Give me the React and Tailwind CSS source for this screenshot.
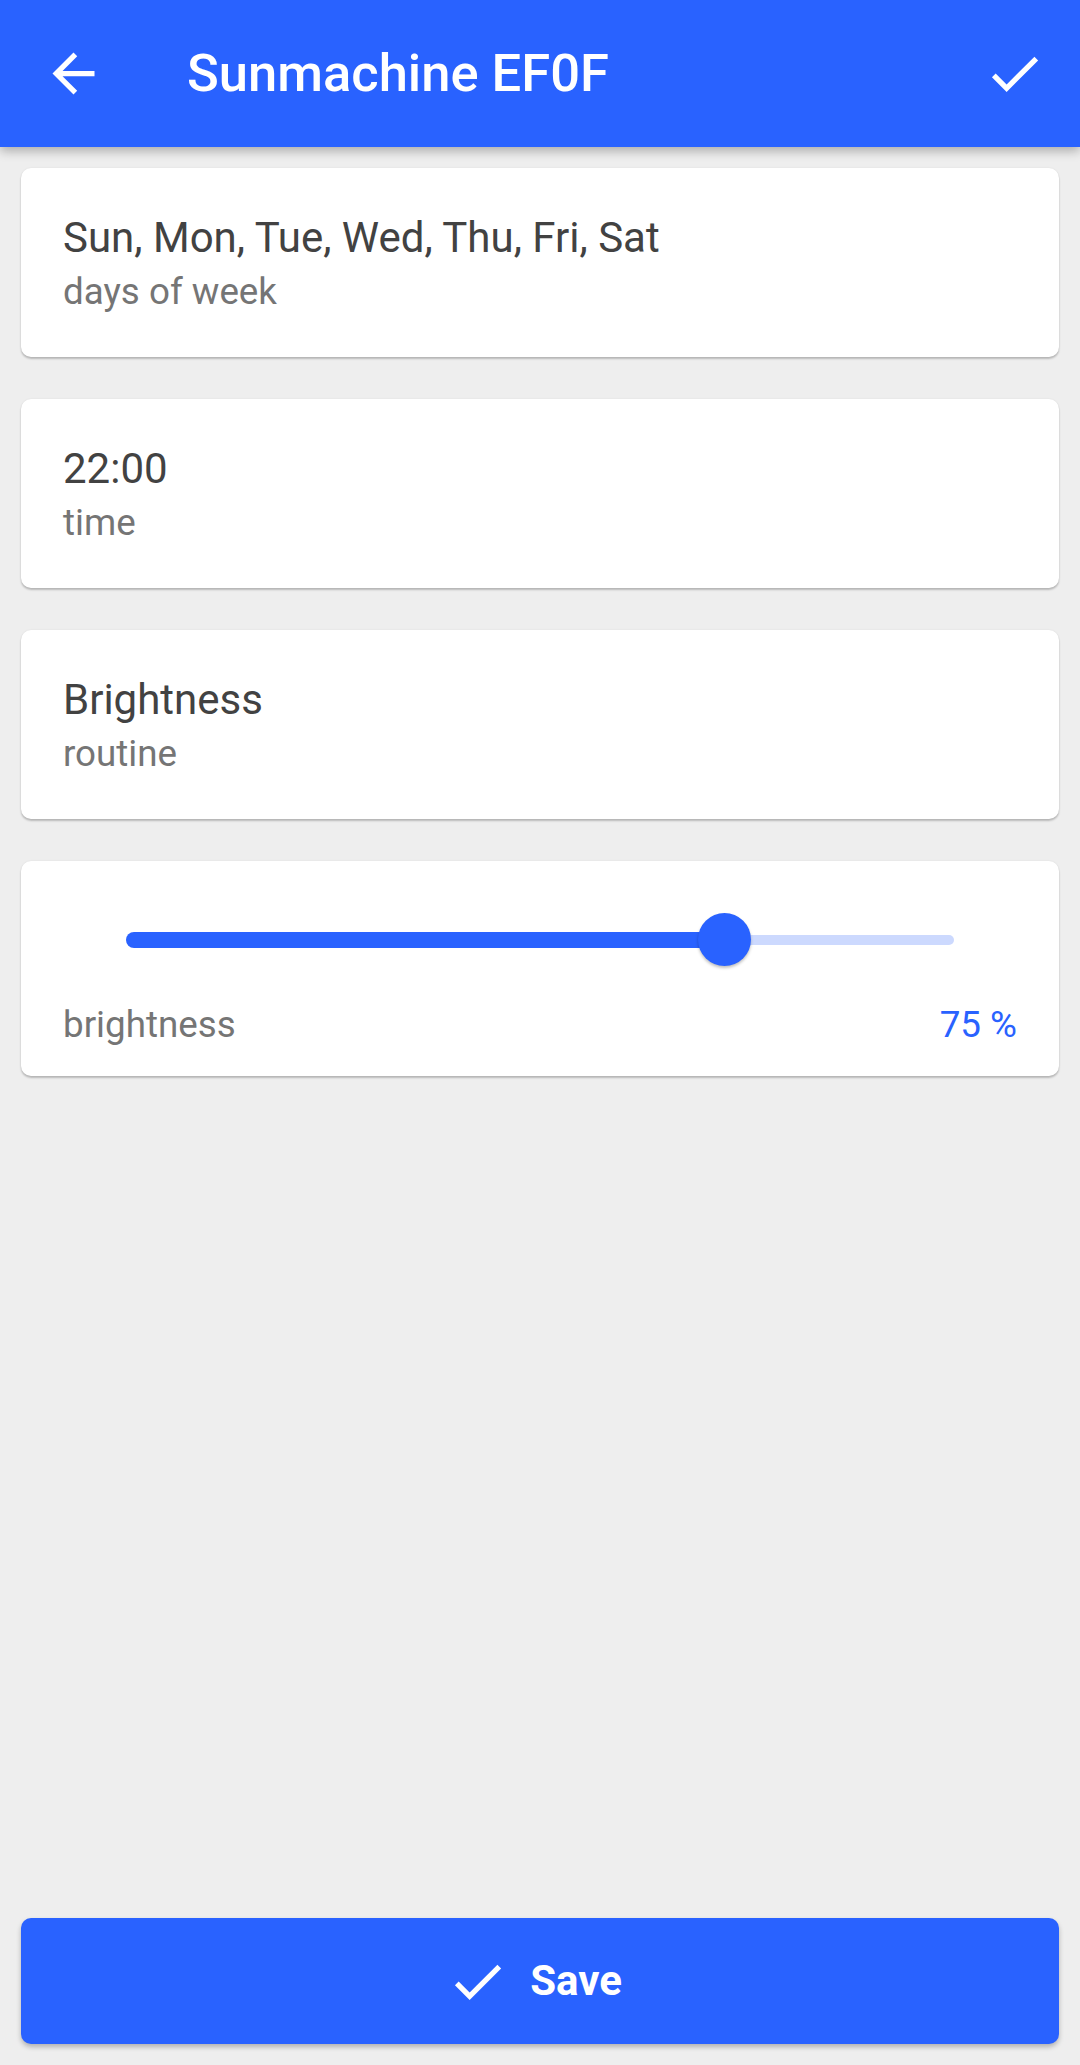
import React from "react";

function Card({ title, subtitle }) {
  return (
    <div className="h-[189px] rounded-[10px] bg-white shadow-[0_2px_2px_rgba(0,0,0,0.22),0_0_2px_rgba(0,0,0,0.08)] pl-[42px] pr-[42px] pt-[45px] flex flex-col">
      <div className="text-[42px] leading-[49px] text-[#424242]">{title}</div>
      <div className="mt-[8px] text-[36.75px] leading-[43px] text-[#757575]">{subtitle}</div>
    </div>
  );
}

function CheckIcon({ className }) {
  return (
    <svg viewBox="0 0 24 24" className={className} fill="currentColor">
      <path d="M9 16.17L4.83 12l-1.42 1.41L9 19 21 7l-1.41-1.41z" />
    </svg>
  );
}

export default function App() {
  const fraction = 598 / 828;
  return (
    <div
      className="min-h-[2065px] w-[1080px] bg-[#eeeeee] flex flex-col"
      style={{ fontFamily: "Roboto, 'Noto Sans', Arial, sans-serif" }}
    >
      <header className="relative z-10 h-[147px] bg-[#2962ff] shadow-[0_4px_10px_rgba(0,0,0,0.28)] flex items-center pl-[42px] pr-[34px] text-white">
        <svg viewBox="0 0 24 24" className="w-[63px] h-[63px]" fill="currentColor">
          <path d="M20 11H7.83l5.59-5.59L12 4l-8 8 8 8 1.41-1.41L7.83 13H20v-2z" />
        </svg>
        <div className="ml-[82px] flex-1 text-[52.5px] font-medium leading-none">Sunmachine EF0F</div>
        <CheckIcon className="w-[63px] h-[63px]" />
      </header>

      <main className="flex flex-col gap-[42px] px-[21px] pt-[21px]">
        <Card title="Sun, Mon, Tue, Wed, Thu, Fri, Sat" subtitle="days of week" />
        <Card title="22:00" subtitle="time" />
        <Card title="Brightness" subtitle="routine" />

        <div className="h-[215px] rounded-[10px] bg-white shadow-[0_2px_2px_rgba(0,0,0,0.22),0_0_2px_rgba(0,0,0,0.08)] pt-[52px] flex flex-col">
          <div className="px-[105px]">
            <div className="relative h-[53px] flex items-center">
              <div
                className="h-[16px] bg-[#2962ff] rounded-l-full"
                style={{ width: `${fraction * 100}%` }}
              />
              <div className="h-[10px] flex-1 bg-[#ccd9fe] rounded-r-full" />
              <div
                className="absolute top-0 w-[53px] h-[53px] -ml-[26px] rounded-full bg-[#2962ff] shadow-[0_2px_3px_rgba(0,0,0,0.25)]"
                style={{ left: `${fraction * 100}%` }}
              />
            </div>
          </div>
          <div className="mt-[37px] flex justify-between pl-[42px] pr-[42px] text-[36.75px] leading-[43px]">
            <span className="text-[#757575]">brightness</span>
            <span className="text-[#2962ff]">75 %</span>
          </div>
        </div>
      </main>

      <div className="flex-1" />

      <div className="px-[21px] pb-[21px]">
        <button className="w-full h-[126px] rounded-[10px] bg-[#2962ff] shadow-[0_3px_5px_rgba(0,0,0,0.25)] flex items-center justify-center pr-[12px] text-white">
          <CheckIcon className="w-[63px] h-[63px]" />
          <span className="ml-[21px] text-[42px] font-bold leading-none">Save</span>
        </button>
      </div>
    </div>
  );
}
